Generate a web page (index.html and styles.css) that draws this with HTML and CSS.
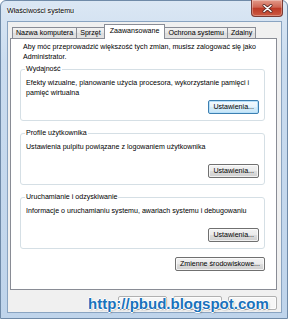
FILE: index.html
```html
<!DOCTYPE html>
<html lang="pl">
<head>
    <meta charset="UTF-8">
    <meta name="viewport" content="width=device-width, initial-scale=1.0">
    <title>Właściwości systemu</title>
    <link rel="stylesheet" href="styles.css">
</head>
<body>
    <div class="window">
        <div class="titlebar">
            <span class="title">Właściwości systemu</span>
            <div class="close" role="button" title="Zamknij">
                <svg width="11" height="9" viewBox="0 0 11 9">
                    <path d="M2 1.5 L9 7.5 M9 1.5 L2 7.5" stroke="#5a2a26" stroke-width="3" stroke-linecap="round"/>
                    <path d="M2 1.5 L9 7.5 M9 1.5 L2 7.5" stroke="#fff" stroke-width="1.6" stroke-linecap="round"/>
                </svg>
            </div>
        </div>

        <div class="client">
            <div class="tabs">
                <span class="tab">Nazwa komputera</span>
                <span class="tab">Sprzęt</span>
                <span class="tab active">Zaawansowane</span>
                <span class="tab">Ochrona systemu</span>
                <span class="tab">Zdalny</span>
            </div>

            <div class="panel">
                <p class="note">Aby móc przeprowadzić większość tych zmian, musisz zalogować się jako<br>Administrator.</p>

                <fieldset class="group">
                    <legend>Wydajność</legend>
                    <div class="group-body">
                        <p>Efekty wizualne, planowanie użycia procesora, wykorzystanie pamięci i<br>pamięć wirtualna</p>
                        <button class="btn default">Ustawienia...</button>
                    </div>
                </fieldset>

                <fieldset class="group">
                    <legend>Profile użytkownika</legend>
                    <div class="group-body">
                        <p>Ustawienia pulpitu powiązane z logowaniem użytkownika</p>
                        <button class="btn">Ustawienia...</button>
                    </div>
                </fieldset>

                <fieldset class="group">
                    <legend>Uruchamianie i odzyskiwanie</legend>
                    <div class="group-body">
                        <p>Informacje o uruchamianiu systemu, awariach systemu i debugowaniu</p>
                        <button class="btn">Ustawienia...</button>
                    </div>
                </fieldset>

                <div class="env-row">
                    <button class="btn env">Zmienne środowiskowe...</button>
                </div>
            </div>

            <!-- OK / Anuluj / Zastosuj, covered by the watermark -->
            <div class="footer">
                <button class="btn footer-btn" aria-label="OK"></button>
                <button class="btn footer-btn" aria-label="Anuluj"></button>
                <button class="btn footer-btn" aria-label="Zastosuj"></button>
            </div>
        </div>

        <div class="watermark">http://pbud.blogspot.com</div>
    </div>
</body>
</html>
```

FILE: styles.css
```css
* {
    box-sizing: border-box;
}
body {
    margin: 0;
    background: #fff;
    font-family: "Liberation Sans", Arial, sans-serif;
    font-size: 7.1px;
    color: #000;
}
p {
    margin: 0;
}
.window {
    position: relative;
    width: 288px;
    height: 319px;
    border: 1px solid #6f8aa8;
    border-radius: 6px 6px 0 0;
    background: linear-gradient(#dbe7f4, #cadcef 60px, #bfd4eb);
    padding: 0 5px 5px 6px;
    display: flex;
    flex-direction: column;
}
.titlebar {
    height: 20px;
    display: flex;
    justify-content: space-between;
    align-items: flex-start;
}
.title {
    margin-top: 5px;
    line-height: 10px;
    text-shadow: 0 0 3px #fff, 0 0 2px #fff;
}
.close {
    flex: none;
    width: 32px;
    height: 17px;
    margin-top: -1px;
    margin-right: -1px;
    border: 1px solid #7a3b35;
    border-top: none;
    border-radius: 0 0 4px 4px;
    background: linear-gradient(#e39a89, #cf6653 45%, #bd3a26 52%, #cc5a43);
    box-shadow: inset 0 0 0 1px rgba(255,255,255,0.3);
    display: flex;
    align-items: center;
    justify-content: center;
}
.client {
    flex: 1;
    border: 1px solid #8aa4c1;
    background: #f0f0f0;
    padding: 2px 4px 0 2px;
}
.tabs {
    display: flex;
    align-items: flex-end;
    height: 14px;
    padding-left: 2px;
}
.tab {
    height: 11px;
    line-height: 10px;
    padding: 0 3px;
    border: 1px solid #898c95;
    border-bottom: none;
    margin-right: -1px;
    background: linear-gradient(#f3f3f3, #e6e6e6 50%, #dcdcdc 51%, #e3e3e3);
    white-space: nowrap;
}
.tab.active {
    position: relative;
    z-index: 1;
    height: 15px;
    margin: 0 -1px -1px 0;
    padding: 0 5px;
    background: #fff;
    line-height: 13px;
}
.panel {
    height: 252px;
    background: #fff;
    border: 1px solid #898c95;
    padding: 3px 11px 0 9px;
}
.note {
    margin-left: 3px;
    line-height: 10px;
    margin-bottom: 2px;
}
.group {
    margin: 0 0 7px;
    padding: 0 5px 6px;
    border: 1px solid #d5dfe5;
    border-radius: 3px;
}
.group legend {
    padding: 0 1px;
    margin-left: -1px;
    line-height: 10px;
}
.group-body {
    height: 40px;
    padding-top: 4px;
    display: flex;
    flex-direction: column;
    align-items: flex-end;
}
.group-body p {
    align-self: stretch;
    line-height: 10px;
}
.group-body .btn {
    margin-top: auto;
}
.btn {
    height: 14px;
    min-width: 49px;
    padding: 0 4px;
    font: inherit;
    color: #000;
    line-height: 12px;
    white-space: nowrap;
    border: 1px solid #707070;
    border-radius: 2px;
    background: linear-gradient(#f2f2f2, #ebebeb 50%, #dddddd 51%, #cfcfcf);
    box-shadow: inset 0 0 0 1px rgba(255,255,255,0.7);
}
.btn.default {
    border-color: #3c7fb1;
    background: linear-gradient(#f4fafe, #e6f4fc 50%, #d6edfa 51%, #c6e5f7);
    box-shadow: inset 0 0 0 1px #b7e0f9;
}
.env-row {
    display: flex;
    justify-content: flex-end;
    padding-top: 1px;
}
.btn.env {
    min-width: 88px;
}
.footer {
    display: flex;
    justify-content: flex-end;
    gap: 6px;
    margin-top: 6px;
}
.footer-btn {
    width: 49px;
    background: #f6f6f6;
    border-color: #b0b0b0;
}
.watermark {
    position: absolute;
    left: 87px;
    top: 295px;
    font-weight: bold;
    font-size: 15px;
    line-height: 15px;
    color: #1a72bc;
    white-space: nowrap;
    text-shadow: 1px 0 0 #fff, -1px 0 0 #fff, 0 1px 0 #fff, 0 -1px 0 #fff,
                 1px 1px 2px rgba(0,0,0,0.35);
}
```
